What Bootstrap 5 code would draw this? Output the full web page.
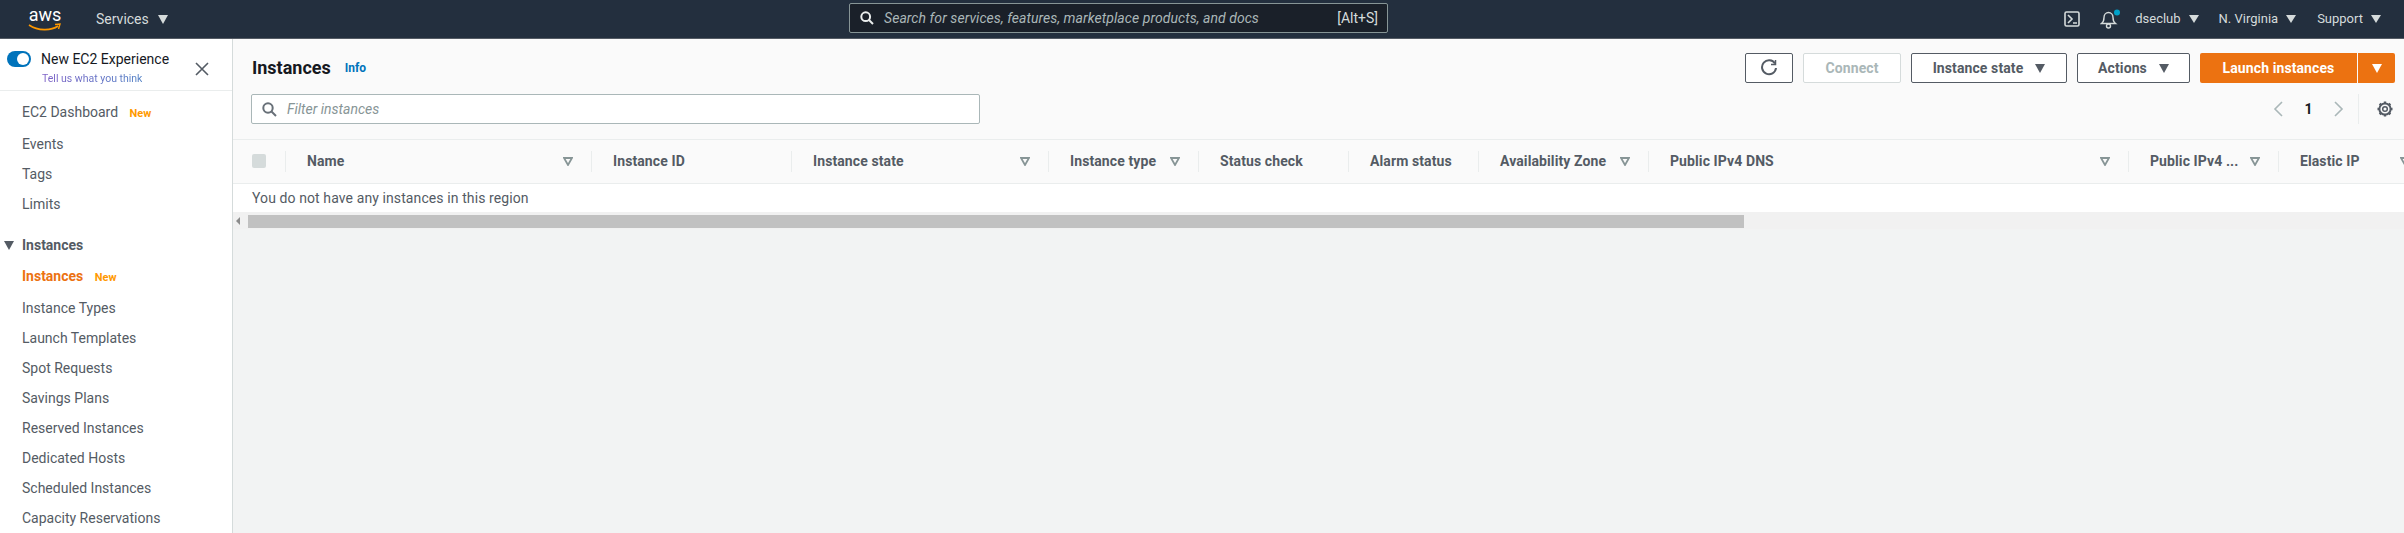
<!DOCTYPE html>
<html lang="en">
<head>
    <meta charset="UTF-8">
    <title>Instances | EC2 Management Console</title>
    <link href="https://cdn.jsdelivr.net/npm/bootstrap@5.3.0/dist/css/bootstrap.min.css" rel="stylesheet">
    <style>
        html, body { height: 100%; }
        body {
            font-family: Roboto, "Liberation Sans", sans-serif;
            font-size: 14px;
            color: #545b64;
            background: #f2f3f3;
            overflow: hidden;
        }
        .caret-down {
            display: inline-block;
            width: 0;
            height: 0;
            border-left: 5.5px solid transparent;
            border-right: 5.5px solid transparent;
            border-top: 9px solid currentColor;
        }
        .top-bar {
            height: 39px;
            background: #232f3e;
            border-bottom: 1px solid #545b64;
            color: #d5dbdb;
            position: relative;
        }
        .aws-logo { margin-left: 27px; width: 36px; height: 30px; }
        .services { margin-left: 33px; font-size: 14px; gap: 9px; width: 70px; }
        .search-box {
            position: absolute;
            left: 849px;
            top: 3px;
            width: 539px;
            height: 30px;
            background: #1a2029;
            border: 1px solid #879596;
            border-radius: 2px;
            padding: 0 9px 0 10px;
            color: #aab7b8;
            font-size: 14px;
        }
        .search-box em { margin-left: 10px; flex: 1; letter-spacing: .06px; }
        .search-box span { color: #d5dbdb; }
        .top-right { margin-left: auto; font-size: 13px; }
        .top-item { gap: 8px; }
        .top-item .caret-down { border-left-width: 5px; border-right-width: 5px; border-top-width: 8px; }
        .bell-icon { margin-left: 20px; }
        .user-item { margin-left: 15px; }
        .region-item { margin-left: 20px; }
        .support-item { margin: 0 23px 0 21px; }
        .page-body { height: 494px; }
        .side-nav {
            width: 233px;
            flex: none;
            background: #fff;
            border-right: 1px solid #d5dbdb;
        }
        .exp-box {
            height: 52px;
            border-bottom: 1px solid #eaeded;
            padding: 12px 0 0 7px;
            position: relative;
        }
        .exp-toggle {
            width: 24px;
            height: 16px;
            border-radius: 8px;
            background: #0073bb;
            position: relative;
            flex: none;
        }
        .exp-toggle::after {
            content: "";
            position: absolute;
            right: 2px;
            top: 2px;
            width: 12px;
            height: 12px;
            border-radius: 50%;
            background: #fff;
        }
        .exp-title { color: #16191f; line-height: 16px; margin-left: 10px; }
        .exp-link {
            font-size: 10.5px;
            line-height: 16px;
            margin: 1px 0 0 11px;
            background: linear-gradient(90deg, #7d5fc6, #4f7fc4);
            -webkit-background-clip: text;
            background-clip: text;
            color: transparent;
            display: inline-block;
        }
        .exp-close { position: absolute; left: 195px; top: 23px; width: 14px; height: 14px; }
        .side-link {
            display: block;
            height: 30px;
            line-height: 30px;
            padding-left: 22px;
            color: #545b64;
            text-decoration: none;
            white-space: nowrap;
        }
        .side-link.first { margin-top: 5px; height: 33px; line-height: 32px; }
        .side-link.active-item { color: #ec7211; font-weight: 700; height: 33px; line-height: 32px; }
        .new-tag { color: #ff9900; font-size: 11px; font-weight: 700; margin-left: 8px; }
        .side-head {
            height: 30px;
            margin-top: 11px;
            padding-left: 4px;
            color: #545b64;
            font-weight: 700;
            gap: 8px;
        }
        .main-area { min-width: 0; flex: 1; }
        .tool-panel {
            height: 101px;
            background: #fafafa;
            border-bottom: 1px solid #eaeded;
            padding: 14px 9px 0 19px;
        }
        .panel-title { font-size: 18px; font-weight: 700; color: #16191f; line-height: 30px; }
        .info-link { font-size: 12px; font-weight: 700; color: #0073bb; margin-left: 14px; text-decoration: none; }
        .aws-btn {
            height: 30px;
            border: 1px solid #545b64;
            border-radius: 2px;
            background: #fff;
            color: #545b64;
            font-size: 14px;
            font-weight: 700;
            padding: 0;
            line-height: 28px;
            gap: 12px;
            letter-spacing: .1px;
        }
        .aws-btn:disabled { border-color: #d5dbdb; color: #aab7b8; opacity: 1; background: #fff; }
        .btn-refresh { width: 48px; }
        .btn-connect { width: 98px; }
        .btn-state { width: 156px; }
        .btn-actions { width: 113px; }
        .btn-launch {
            background: #ec7211;
            border: 0;
            color: #fff;
            width: 157px;
            border-radius: 2px 0 0 2px;
            margin-right: 1px;
        }
        .btn-launch-caret {
            background: #ec7211;
            border: 0;
            color: #fff;
            width: 37px;
            border-radius: 0 2px 2px 0;
        }
        .btn-group-main { gap: 10px; }
        .filter-row { margin-top: 11px; }
        .filter-box {
            width: 729px;
            height: 30px;
            background: #fff;
            border: 1px solid #aab7b8;
            border-radius: 2px;
            padding-left: 10px;
            margin-left: -1px;
        }
        .filter-box em { color: #879596; margin-left: 10px; }
        .pager { margin-left: auto; height: 30px; padding-right: 2px; }
        .pager b { color: #16191f; width: 51px; text-align: center; font-size: 14px; }
        .pager-sep { width: 1px; height: 30px; background: #eaeded; margin: 0 18px 0 14px; }
        .inst-table { table-layout: fixed; width: 2196px; margin: 0; }
        .inst-wrap { overflow: hidden; background: #fff; }
        .inst-table th {
            height: 43px;
            background: #fafafa;
            border-bottom: 1px solid #eaeded;
            color: #545b64;
            font-weight: 700;
            padding: 0 0 0 21px;
            position: relative;
            vertical-align: middle;
            white-space: nowrap;
            letter-spacing: .1px;
        }
        .inst-table th::after {
            content: "";
            position: absolute;
            right: 0;
            top: 11px;
            height: 21px;
            width: 1px;
            background: #eaeded;
        }
        .inst-table th.col-check { padding-left: 19px; }
        .check-box { display: block; width: 14px; height: 14px; border-radius: 2px; background: #d5dbdb; }
        .inst-table td {
            height: 29px;
            padding: 1px 0 0 19px;
            color: #545b64;
            border-bottom: 0;
            vertical-align: middle;
            letter-spacing: .1px;
        }
        .th-flex { padding-right: 19px; }
        .filter-mark { flex: none; width: 10px; height: 9px; margin-left: auto; }
        .scroll-track { height: 17px; background: #f1f1f1; padding: 3px 0 1px 15px; position: relative; }
        .scroll-left {
            position: absolute;
            left: 3px;
            top: 5px;
            border-top: 4px solid transparent;
            border-bottom: 4px solid transparent;
            border-right: 4px solid #8c8c8c;
        }
        .scroll-thumb { width: 1496px; height: 13px; background: #c1c1c1; }
    </style>
</head>
<body>
    <header class="top-bar d-flex align-items-center">
        <svg class="aws-logo" viewBox="0 0 36 30">
            <text x="18" y="17" text-anchor="middle" font-family="Roboto, sans-serif" font-size="18" fill="#fff">aws</text>
            <path d="M2 21 C11 27 24 27 31 22" fill="none" stroke="#f90" stroke-width="1.6"/>
            <path d="M28 20.5 L33 20 L31.5 25" fill="none" stroke="#f90" stroke-width="1.4"/>
        </svg>
        <div class="services d-flex align-items-center text-nowrap">Services <span class="caret-down"></span></div>
        <div class="search-box d-flex align-items-center">
            <svg width="14" height="14" viewBox="0 0 14 14" fill="none" stroke="#eaeded" stroke-width="2"><circle cx="5.7" cy="5.7" r="4.4"/><path d="M9 9l4 4"/></svg>
            <em>Search for services, features, marketplace products, and docs</em>
            <span>[Alt+S]</span>
        </div>
        <div class="top-right d-flex align-items-center">
            <svg width="16" height="16" viewBox="0 0 16 16" fill="none" stroke="#d5dbdb" stroke-width="1.6"><rect x="1" y="1" width="14" height="14" rx="1.5"/><path d="M4 4l4 4-4 4M9 12h4"/></svg>
            <svg class="bell-icon" width="20" height="20" viewBox="0 0 20 20" fill="none" stroke="#d5dbdb" stroke-width="1.4"><path d="M1.5 14.5c2-1.500 2.500-3 2.500-6 0-3 2-5 4.500-5s4.500 2 4.500 5c0 3 .5 4.500 2.500 6z"/><circle cx="8.500" cy="17" r="2"/><circle cx="17" cy="3.500" r="3" fill="#00a1c9" stroke="none"/></svg>
            <div class="top-item user-item d-flex align-items-center">dseclub <span class="caret-down"></span></div>
            <div class="top-item region-item d-flex align-items-center">N. Virginia <span class="caret-down"></span></div>
            <div class="top-item support-item d-flex align-items-center">Support <span class="caret-down"></span></div>
        </div>
    </header>

    <div class="page-body d-flex">
        <nav class="side-nav">
            <div class="exp-box d-flex">
                <span class="exp-toggle"></span>
                <div>
                    <div class="exp-title">New EC2 Experience</div>
                    <div class="exp-link">Tell us what you think</div>
                </div>
                <svg class="exp-close" viewBox="0 0 14 14" stroke="#545b64" stroke-width="1.6"><path d="M1 1l12 12M13 1L1 13"/></svg>
            </div>
            <a class="side-link first" href="#">EC2 Dashboard <span class="new-tag">New</span></a>
            <a class="side-link" href="#">Events</a>
            <a class="side-link" href="#">Tags</a>
            <a class="side-link" href="#">Limits</a>
            <div class="side-head d-flex align-items-center"><span class="caret-down"></span> Instances</div>
            <a class="side-link active-item" href="#">Instances <span class="new-tag">New</span></a>
            <a class="side-link" href="#">Instance Types</a>
            <a class="side-link" href="#">Launch Templates</a>
            <a class="side-link" href="#">Spot Requests</a>
            <a class="side-link" href="#">Savings Plans</a>
            <a class="side-link" href="#">Reserved Instances</a>
            <a class="side-link" href="#">Dedicated Hosts</a>
            <a class="side-link" href="#">Scheduled Instances</a>
            <a class="side-link" href="#">Capacity Reservations</a>
        </nav>

        <main class="main-area">
            <section class="tool-panel">
                <div class="d-flex align-items-center">
                    <span class="panel-title">Instances</span>
                    <a class="info-link" href="#">Info</a>
                    <div class="btn-group-main d-flex ms-auto">
                        <button class="btn aws-btn btn-refresh d-flex align-items-center justify-content-center">
                            <svg width="18" height="18" viewBox="0 0 18 18" fill="none" stroke="#545b64" stroke-width="2"><path d="M15 4.500A7 7 0 1 0 16 9"/><path d="M15.500 1v4.500H11" stroke-width="1.500"/></svg>
                        </button>
                        <button class="btn aws-btn btn-connect" disabled>Connect</button>
                        <button class="btn aws-btn btn-state d-flex align-items-center justify-content-center">Instance state <span class="caret-down"></span></button>
                        <button class="btn aws-btn btn-actions d-flex align-items-center justify-content-center">Actions <span class="caret-down"></span></button>
                        <div class="d-flex">
                            <button class="btn aws-btn btn-launch">Launch instances</button>
                            <button class="btn aws-btn btn-launch-caret d-flex align-items-center justify-content-center"><span class="caret-down"></span></button>
                        </div>
                    </div>
                </div>
                <div class="filter-row d-flex align-items-center">
                    <div class="filter-box d-flex align-items-center">
                        <svg width="15" height="15" viewBox="0 0 15 15" fill="none" stroke="#687078" stroke-width="2"><circle cx="6" cy="6" r="4.700"/><path d="M9.500 9.500l4.500 4.500"/></svg>
                        <em>Filter instances</em>
                    </div>
                    <div class="pager d-flex align-items-center">
                        <svg width="10" height="16" viewBox="0 0 10 16" fill="none" stroke="#aab7b8" stroke-width="1.600"><path d="M9 1L2 8l7 7"/></svg>
                        <b>1</b>
                        <svg width="10" height="16" viewBox="0 0 10 16" fill="none" stroke="#aab7b8" stroke-width="1.600"><path d="M1 1l7 7-7 7"/></svg>
                        <span class="pager-sep"></span>
                        <svg width="16" height="16" viewBox="0 0 16 16" fill="none" stroke="#545b64"><circle cx="8" cy="8" r="2.300" stroke-width="1.500"/><circle cx="8" cy="8" r="5.600" stroke-width="2"/><path d="M8 .5v2M8 13.500v2M.5 8h2M13.500 8h2M2.700 2.700l1.400 1.400M11.900 11.900l1.400 1.400M13.300 2.700l-1.400 1.400M4.100 11.900l-1.400 1.400" stroke-width="2.400"/></svg>
                    </div>
                </div>
            </section>

            <div class="inst-wrap">
                <table class="table inst-table">
                    <thead>
                        <tr id="head-row"></tr>
                    </thead>
                    <tbody>
                        <tr><td colspan="11">You do not have any instances in this region</td></tr>
                    </tbody>
                </table>
            </div>
            <div class="scroll-track">
                <span class="scroll-left"></span>
                <div class="scroll-thumb"></div>
            </div>
        </main>
    </div>

    <script>
        // column widths read off the console table
        const columns = [
            ["", 53, false],
            ["Name", 306, true],
            ["Instance ID", 200, false],
            ["Instance state", 257, true],
            ["Instance type", 150, true],
            ["Status check", 150, false],
            ["Alarm status", 130, false],
            ["Availability Zone", 170, true],
            ["Public IPv4 DNS", 480, true],
            ["Public IPv4 ...", 150, true],
            ["Elastic IP", 150, true]
        ];
        const filterMark = '<svg class="filter-mark" viewBox="0 0 10 9" fill="none" stroke="#879596" stroke-width="1.800"><path d="M1 1h8L5 8z"/></svg>';
        const headRow = document.getElementById("head-row");
        columns.forEach(([label, width, hasFilter]) => {
            const th = document.createElement("th");
            th.style.width = `${width}px`;
            if (label === "") {
                th.className = "col-check";
                th.innerHTML = '<span class="check-box"></span>';
            } else {
                th.innerHTML = `<div class="d-flex align-items-center th-flex">${label}${hasFilter ? filterMark : ""}</div>`;
            }
            headRow.appendChild(th);
        });
    </script>

    <script src="https://cdn.jsdelivr.net/npm/bootstrap@5.3.0/dist/js/bootstrap.bundle.min.js"></script>
</body>
</html>
